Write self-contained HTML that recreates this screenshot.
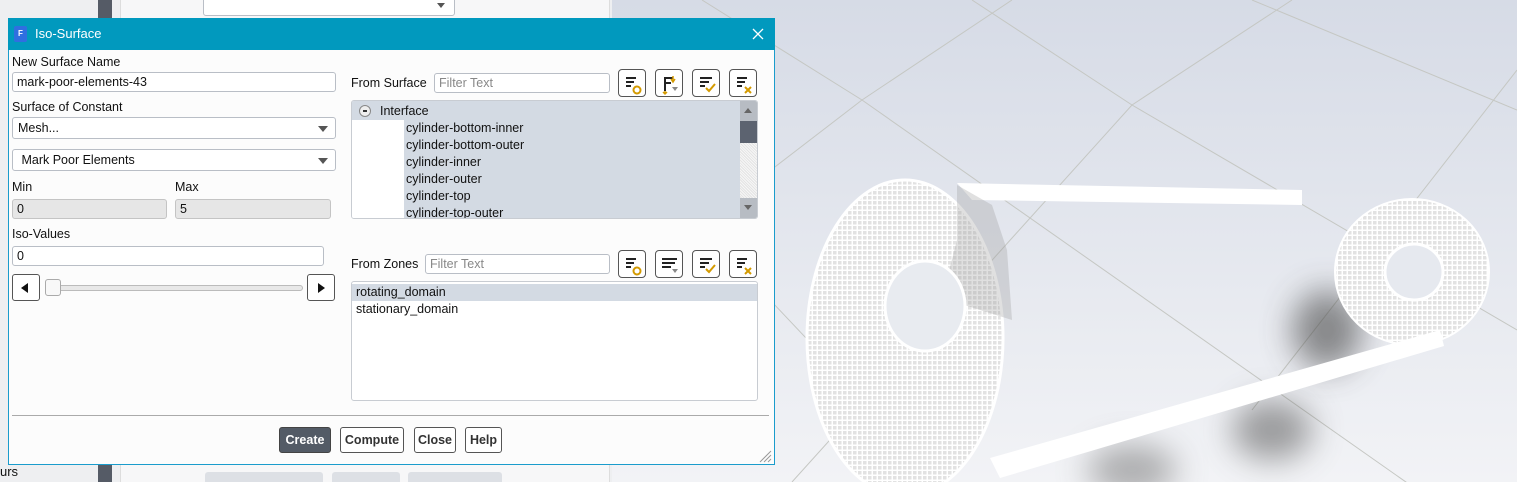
<!DOCTYPE html>
<html><head><meta charset="utf-8"><style>
*{box-sizing:border-box;margin:0;padding:0}
html,body{width:1517px;height:482px;overflow:hidden}
body{position:relative;font-family:"Liberation Sans",sans-serif;font-size:12.5px;color:#111;background:#e6e9ef}
.abs{position:absolute}
.inp{position:absolute;background:#fff;border:1px solid #b9bec6;border-radius:3px;height:20px;padding:2px 4px;line-height:15px}
.dis{background:#e6e6e6;border-color:#c4c4c4}
.sel{position:absolute;background:#fff;border:1px solid #b9bec6;border-radius:3px;height:22px;padding:3px 5px;line-height:15px}
.sel:after{content:"";position:absolute;right:7px;top:8px;border-left:5px solid transparent;border-right:5px solid transparent;border-top:6px solid #555}
.ib{position:absolute;width:28px;height:28px;border:1px solid #555;border-radius:4px;background:#fff}
.ib svg{position:absolute;left:0;top:0}
.btn{position:absolute;top:427px;height:26px;border:1px solid #555;border-radius:3px;background:#fff;font-weight:bold;font-size:12.5px;line-height:24px;text-align:center;color:#333}
.li{position:absolute;left:0;right:16px;height:17px;line-height:17px}
</style></head><body>
<div class="abs" style="left:0;top:0;width:615px;height:482px;background:#eeeff1"></div>
<div class="abs" style="left:98px;top:0;width:14px;height:482px;background:#555b66"></div>
<div class="abs" style="left:120px;top:0;width:490px;height:482px;background:#f7f7f8;border-left:1px solid #ddd;border-right:1px solid #ddd"></div>
<div class="abs" style="left:203px;top:-4px;width:252px;height:20px;background:#fff;border:1px solid #b9bec6;border-radius:3px"></div>
<div class="abs" style="left:437px;top:3px;border-left:4px solid transparent;border-right:4px solid transparent;border-top:5px solid #555"></div>
<div class="abs" style="left:205px;top:472px;width:118px;height:10px;background:#dde0e5;border-radius:3px 3px 0 0"></div>
<div class="abs" style="left:332px;top:472px;width:68px;height:10px;background:#dde0e5;border-radius:3px 3px 0 0"></div>
<div class="abs" style="left:408px;top:472px;width:94px;height:10px;background:#dde0e5;border-radius:3px 3px 0 0"></div>
<div class="abs" style="left:0;top:464px;font-size:13px;line-height:16px">urs</div>
<svg class="abs" style="left:612px;top:0" width="905" height="482">
<defs><linearGradient id="bg" x1="0" y1="0" x2="0" y2="1"><stop offset="0" stop-color="#d6dbe6"/><stop offset="1" stop-color="#f2f3f6"/></linearGradient>
<filter id="bl" x="-100%" y="-100%" width="300%" height="300%"><feGaussianBlur stdDeviation="16"/></filter>
<pattern id="mesh" width="5" height="5" patternUnits="userSpaceOnUse"><rect width="5" height="5" fill="#fff"/><rect x="1" y="1" width="3.5" height="3.5" fill="#e2e2e2"/></pattern></defs>
<rect width="905" height="482" fill="url(#bg)"/>
<g stroke="#c5c7c3" stroke-width="1" fill="none">
<path d="M90 0 L250 100 L905 560"/><path d="M250 100 L400 0"/><path d="M250 100 L-10 300"/>
<path d="M360 0 L520 105 L905 330"/><path d="M520 105 L680 0"/><path d="M520 105 L180 482"/>
<path d="M640 0 L905 110"/><path d="M0 150 L40 175 L330 482"/><path d="M905 70 L640 410"/></g>
<ellipse cx="715" cy="330" rx="35" ry="40" fill="#444" filter="url(#bl)" opacity=".6"/>
<ellipse cx="660" cy="430" rx="40" ry="30" fill="#555" filter="url(#bl)" opacity=".55"/>
<ellipse cx="520" cy="470" rx="45" ry="25" fill="#666" filter="url(#bl)" opacity=".5"/>
<path d="M345 183 L690 190 L690 205 L360 200 Z" fill="#fff"/>
<ellipse cx="800" cy="272" rx="77" ry="73" fill="url(#mesh)" stroke="#fff" stroke-width="2"/>
<ellipse cx="802" cy="272" rx="29" ry="28" fill="#e6e9ef" stroke="#fff" stroke-width="3"/>
<path d="M378 458 L828 330 L832 346 L388 478 Z" fill="#fff"/>
<ellipse cx="293" cy="338" rx="98" ry="158" fill="url(#mesh)" stroke="#fff" stroke-width="3"/>
<path d="M345 185 L380 205 L395 250 L400 320 L330 298 L345 240 Z" fill="#999" opacity=".3"/>
<ellipse cx="313" cy="306" rx="40" ry="45" fill="#e8ebf0" stroke="#fff" stroke-width="3"/>
</svg>
<div class="abs" style="left:8px;top:18px;width:767px;height:447px;background:#fcfcfc;border:1px solid #1a9ccc"></div>
<div class="abs" style="left:8px;top:18px;width:767px;height:32px;background:#0199be"></div>
<div class="abs" style="left:14px;top:26px;width:13px;height:16px;background:#2f6fe0;border-radius:2px;color:#fff;font-size:8px;font-weight:bold;line-height:16px;text-align:center">F</div>
<div class="abs" style="left:35px;top:26px;color:#fff;font-size:13px;line-height:16px">Iso-Surface</div>
<svg class="abs" style="left:752px;top:28px" width="12" height="12"><path d="M1 1 L11 11 M11 1 L1 11" stroke="#fff" stroke-width="1.3"/></svg>

<div class="abs" style="left:12px;top:55px">New Surface Name</div>
<div class="inp" style="left:12px;top:72px;width:324px">mark-poor-elements-43</div>
<div class="abs" style="left:12px;top:100px">Surface of Constant</div>
<div class="sel" style="left:12px;top:117px;width:324px">Mesh...</div>
<div class="sel" style="left:12px;top:149px;width:324px">&nbsp;Mark Poor Elements</div>
<div class="abs" style="left:12px;top:180px">Min</div>
<div class="abs" style="left:175px;top:180px">Max</div>
<div class="inp dis" style="left:12px;top:199px;width:155px">0</div>
<div class="inp dis" style="left:175px;top:199px;width:156px">5</div>
<div class="abs" style="left:12px;top:227px">Iso-Values</div>
<div class="inp" style="left:12px;top:246px;width:312px">0</div>
<div class="abs" style="left:12px;top:274px;width:28px;height:27px;border:1px solid #555;border-radius:3px;background:#fff"><div class="abs" style="left:8px;top:8px;border-top:5px solid transparent;border-bottom:5px solid transparent;border-right:7px solid #111"></div></div>
<div class="abs" style="left:307px;top:274px;width:28px;height:27px;border:1px solid #555;border-radius:3px;background:#fff"><div class="abs" style="left:10px;top:8px;border-top:5px solid transparent;border-bottom:5px solid transparent;border-left:7px solid #111"></div></div>
<div class="abs" style="left:45px;top:285px;width:258px;height:6px;border:1px solid #bbb;border-radius:3px;background:#e8e8e8"></div>
<div class="abs" style="left:45px;top:279px;width:16px;height:17px;border:1px solid #aaa;border-radius:3px;background:#f8f8f8"></div>

<div class="abs" style="left:351px;top:76px">From Surface</div>
<div class="inp" style="left:434px;top:73px;width:176px;color:#888">Filter Text</div>
<div class="abs" style="left:351px;top:257px">From Zones</div>
<div class="inp" style="left:425px;top:254px;width:185px;color:#888">Filter Text</div>

<div class="ib" style="left:618px;top:69px"><svg width="28" height="28"><g fill="#222"><rect x="7" y="7" width="10" height="2"/><rect x="7" y="11" width="8" height="2"/><rect x="7" y="15" width="5" height="2"/></g><circle cx="18" cy="20" r="3.5" fill="none" stroke="#d49a00" stroke-width="2"/></svg></div>
<div class="ib" style="left:655px;top:69px"><svg width="28" height="28"><g fill="#222"><rect x="8" y="7" width="2" height="14"/><rect x="8" y="7" width="9" height="2"/><rect x="8" y="12" width="7" height="2"/></g><path d="M17 6 L17 12 M15 9 L17 12 L19 9" stroke="#d49a00" stroke-width="1.5" fill="none"/><path d="M9 21 L9 24 M7 22 L9 24 L11 22" stroke="#d49a00" stroke-width="1.5" fill="none"/><path d="M16 17 L22 17 L19 21Z" fill="#888"/></svg></div>
<div class="ib" style="left:692px;top:69px"><svg width="28" height="28"><g fill="#222"><rect x="7" y="7" width="12" height="2"/><rect x="7" y="11" width="9" height="2"/><rect x="7" y="15" width="5" height="2"/></g><path d="M13 18 L16 21 L22 14" stroke="#d49a00" stroke-width="2" fill="none"/></svg></div>
<div class="ib" style="left:729px;top:69px"><svg width="28" height="28"><g fill="#222"><rect x="7" y="7" width="10" height="2"/><rect x="7" y="11" width="8" height="2"/><rect x="7" y="15" width="5" height="2"/></g><path d="M15 17 L21 23 M21 17 L15 23" stroke="#d49a00" stroke-width="2"/></svg></div>

<div class="ib" style="left:618px;top:250px"><svg width="28" height="28"><g fill="#222"><rect x="7" y="7" width="10" height="2"/><rect x="7" y="11" width="8" height="2"/><rect x="7" y="15" width="5" height="2"/></g><circle cx="18" cy="20" r="3.5" fill="none" stroke="#d49a00" stroke-width="2"/></svg></div>
<div class="ib" style="left:655px;top:250px"><svg width="28" height="28"><g fill="#222"><rect x="6" y="7" width="15" height="2"/><rect x="6" y="11" width="13" height="2"/><rect x="6" y="15" width="9" height="2"/></g><path d="M16 18 L22 18 L19 22Z" fill="#888"/></svg></div>
<div class="ib" style="left:692px;top:250px"><svg width="28" height="28"><g fill="#222"><rect x="7" y="7" width="12" height="2"/><rect x="7" y="11" width="9" height="2"/><rect x="7" y="15" width="5" height="2"/></g><path d="M13 18 L16 21 L22 14" stroke="#d49a00" stroke-width="2" fill="none"/></svg></div>
<div class="ib" style="left:729px;top:250px"><svg width="28" height="28"><g fill="#222"><rect x="7" y="7" width="10" height="2"/><rect x="7" y="11" width="8" height="2"/><rect x="7" y="15" width="5" height="2"/></g><path d="M15 17 L21 23 M21 17 L15 23" stroke="#d49a00" stroke-width="2"/></svg></div>

<div class="abs" style="left:351px;top:100px;width:407px;height:119px;border:1px solid #c8ccd2;border-radius:3px;background:#fff;overflow:hidden">
 <div class="abs" style="left:0;top:0;width:388px;height:119px;background:#d3dae3"></div>
 <div class="abs" style="left:0;top:19px;width:52px;height:100px;background:#fff"></div>
 <div class="abs" style="left:7px;top:4px;width:12px;height:12px;border:1px solid #888;border-radius:50%;background:#eee"><div class="abs" style="left:3px;top:4px;width:4px;height:1.5px;background:#333"></div></div>
 <div class="li" style="left:28px;top:2px">Interface</div>
 <div class="li" style="left:54px;top:19px">cylinder-bottom-inner</div>
 <div class="li" style="left:54px;top:36px">cylinder-bottom-outer</div>
 <div class="li" style="left:54px;top:53px">cylinder-inner</div>
 <div class="li" style="left:54px;top:70px">cylinder-outer</div>
 <div class="li" style="left:54px;top:87px">cylinder-top</div>
 <div class="li" style="left:54px;top:104px">cylinder-top-outer</div>
 <div class="abs" style="left:388px;top:0;width:17px;height:119px;background:repeating-linear-gradient(45deg,#e4e4e4 0 1px,#f6f6f6 1px 2px)"></div>
 <div class="abs" style="left:388px;top:0;width:17px;height:20px;background:#b7bcc3"></div>
 <div class="abs" style="left:388px;top:20px;width:17px;height:22px;background:#5c6370"></div>
 <div class="abs" style="left:388px;top:97px;width:17px;height:20px;background:#b7bcc3"></div>
 <div class="abs" style="left:392px;top:7px;border-left:4px solid transparent;border-right:4px solid transparent;border-bottom:5px solid #666"></div>
 <div class="abs" style="left:392px;top:104px;border-left:4px solid transparent;border-right:4px solid transparent;border-top:5px solid #666"></div>
</div>
<div class="abs" style="left:351px;top:281px;width:407px;height:120px;border:1px solid #c8ccd2;border-radius:3px;background:#fff">
 <div class="abs" style="left:0;top:2px;width:405px;height:17px;background:#d3dae3"></div>
 <div class="li" style="left:4px;top:2px">rotating_domain</div>
 <div class="li" style="left:4px;top:19px">stationary_domain</div>
</div>
<div class="abs" style="left:12px;top:415px;width:757px;height:1px;background:#aaa"></div>
<div class="btn" style="left:279px;width:52px;background:#535b66;color:#fff;border-color:#444">Create</div>
<div class="btn" style="left:340px;width:64px">Compute</div>
<div class="btn" style="left:414px;width:42px">Close</div>
<div class="btn" style="left:465px;width:37px">Help</div>
<svg class="abs" style="left:758px;top:449px" width="14" height="14"><path d="M2 13 L13 2 M6 13 L13 6 M10 13 L13 10" stroke="#999"/></svg>
</body></html>
